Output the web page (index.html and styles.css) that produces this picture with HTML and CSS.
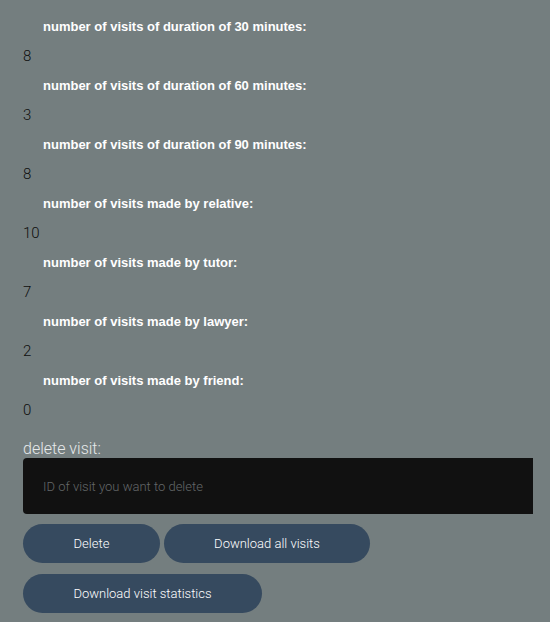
FILE: index.html
```html
<!DOCTYPE html>
<html>
<head>
<meta charset="utf-8">
<link rel="stylesheet" href="styles.css">
</head>
<body>
<div class="page">
  <div class="stat"><h4 class="stat-label">number of visits of duration of 30 minutes:</h4><p class="stat-value">8</p></div>
  <div class="stat"><h4 class="stat-label">number of visits of duration of 60 minutes:</h4><p class="stat-value">3</p></div>
  <div class="stat"><h4 class="stat-label">number of visits of duration of 90 minutes:</h4><p class="stat-value">8</p></div>
  <div class="stat"><h4 class="stat-label">number of visits made by relative:</h4><p class="stat-value">10</p></div>
  <div class="stat"><h4 class="stat-label">number of visits made by tutor:</h4><p class="stat-value">7</p></div>
  <div class="stat"><h4 class="stat-label">number of visits made by lawyer:</h4><p class="stat-value">2</p></div>
  <div class="stat"><h4 class="stat-label">number of visits made by friend:</h4><p class="stat-value">0</p></div>
  <label class="field-label" for="vid">delete visit:</label>
  <input class="field-input" id="vid" type="text" placeholder="ID of visit you want to delete">
  <div class="actions actions-first">
    <button class="btn btn-delete">Delete</button>
    <button class="btn btn-all">Download all visits</button>
  </div>
  <div class="actions">
    <button class="btn btn-stats">Download visit statistics</button>
  </div>
</div>
</body>
</html>
```
FILE: styles.css
```css
html, body {
  margin: 0;
  padding: 0;
  background: #747e7f;
}
.page {
  padding: 0 17px 0 23px;
  font-family: Roboto, "Liberation Sans", sans-serif;
}
.stat {
  display: flex;
  flex-direction: column;
}
.stat-label {
  margin: 0;
  padding: 18px 0 0 20px;
  height: 17px;
  font-family: "Liberation Sans", Arial, sans-serif;
  font-weight: bold;
  font-size: 13px;
  line-height: 17px;
  color: #ffffff;
}
.stat + .stat .stat-label {
  padding-top: 12px;
}
.stat-value {
  margin: 0;
  padding-top: 13px;
  height: 17px;
  font-weight: 300;
  font-size: 15px;
  line-height: 17px;
  color: #0e0e0e;
}
.field-label {
  display: block;
  margin-top: 21px;
  font-weight: 300;
  font-size: 16px;
  line-height: 18px;
  color: #e6e9ea;
}
.field-input {
  display: block;
  box-sizing: border-box;
  width: 510px;
  height: 56px;
  margin-top: 0;
  padding: 0 20px;
  border: none;
  border-radius: 4px 0 0 4px;
  background: #111111;
  color: #cccccc;
  font-family: Roboto, "Liberation Sans", sans-serif;
  font-weight: 300;
  font-size: 13px;
  outline: none;
}
.field-input::placeholder {
  color: #646869;
}
.actions {
  display: flex;
  gap: 4px;
  margin-top: 11px;
}
.actions-first {
  margin-top: 10px;
}
.btn {
  height: 39px;
  border: none;
  border-radius: 20px;
  background: #364a5f;
  color: #ffffff;
  font-family: Roboto, "Liberation Sans", sans-serif;
  font-weight: 300;
  font-size: 13px;
  padding: 0;
}
.btn-delete { width: 137px; }
.btn-all { width: 206px; }
.btn-stats { width: 239px; }
```
